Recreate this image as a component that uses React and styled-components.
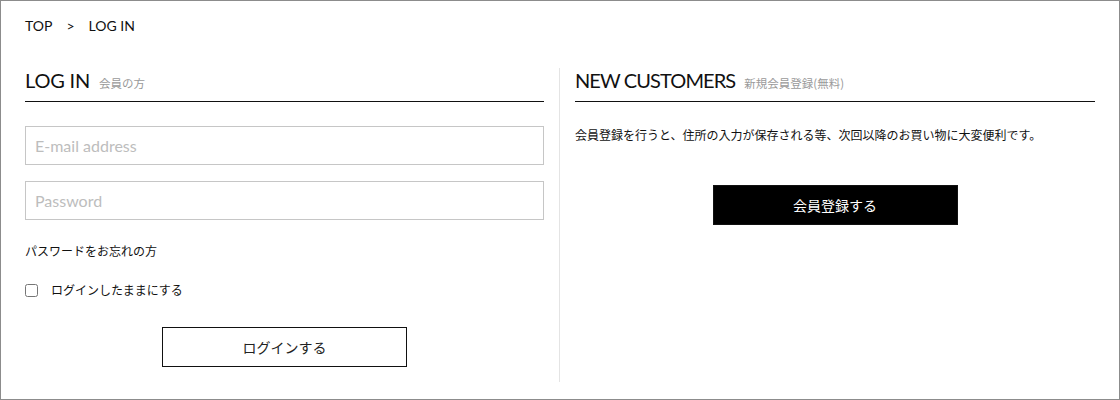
import React from "react";
import styled, { createGlobalStyle } from "styled-components";

const GlobalStyle = createGlobalStyle`
  html, body {
    margin: 0;
    padding: 0;
    background: #fff;
  }
  body {
    font-family: "Noto Sans CJK JP", "Noto Sans", sans-serif;
    color: #111;
  }
  * {
    box-sizing: border-box;
  }
`;

const Frame = styled.div`
  width: 1120px;
  height: 400px;
  border: 1px solid #8c8c8c;
  background: #fff;
  display: flex;
  flex-direction: column;
`;

const Breadcrumb = styled.nav`
  display: flex;
  align-items: center;
  gap: 14px;
  padding: 15px 24px 0;
  height: 35px;
  font-family: "Lato", "Liberation Sans", sans-serif;
  font-size: 14px;
  line-height: 20px;
  color: #111;
`;

const Columns = styled.div`
  flex: 1;
  display: flex;
  padding: 32px 24px 17px;
`;

const Column = styled.section`
  flex: ${(p) => (p.$right ? "1" : "0 0 534px")};
  display: flex;
  flex-direction: column;
  padding: ${(p) => (p.$right ? "0 0 0 15px" : "0 15px 0 0")};
  border-left: ${(p) => (p.$right ? "1px solid #e4e4e4" : "none")};
`;

const Heading = styled.div`
  display: flex;
  align-items: baseline;
  gap: 9px;
  padding-bottom: 9px;
  border-bottom: 1px solid #111;
  height: 34px;
`;

const Title = styled.h2`
  margin: 0;
  font-family: "Lato", "Liberation Sans", sans-serif;
  font-weight: 400;
  font-size: 20px;
  line-height: 24px;
  letter-spacing: ${(p) => p.$spacing || "-0.2px"};
  color: #111;
`;

const Sub = styled.span`
  font-family: "Noto Sans CJK JP", sans-serif;
  font-size: 11.5px;
  color: #9a9a9a;
`;

const Field = styled.input`
  display: block;
  width: 100%;
  height: 39px;
  margin-top: ${(p) => p.$gap}px;
  padding: 0 9px;
  border: 1px solid #c6c6c6;
  border-radius: 0;
  font-family: "Lato", "Liberation Sans", sans-serif;
  font-size: 16px;
  color: #222;
  outline: none;
  &::placeholder {
    color: #bdbdbd;
  }
`;

const Small = styled.p`
  margin: ${(p) => p.$margin};
  font-size: 12px;
  line-height: 18px;
  color: #111;
`;

const CheckRow = styled.label`
  display: flex;
  align-items: center;
  gap: 13px;
  margin-top: 21px;
  font-size: 12px;
  line-height: 18px;
  color: #111;
  input {
    margin: 0;
    width: 13px;
    height: 13px;
  }
`;

const Button = styled.button`
  display: block;
  align-self: center;
  width: 245px;
  height: 40px;
  margin-top: ${(p) => p.$top}px;
  border: 1px solid #111;
  border-radius: 0;
  background: ${(p) => (p.$dark ? "#000" : "#fff")};
  color: ${(p) => (p.$dark ? "#fff" : "#222")};
  font-family: "Noto Sans CJK JP", sans-serif;
  font-size: 14px;
  cursor: pointer;
`;

const App = () => {
  return (
    <Frame>
      <GlobalStyle />
      <Breadcrumb>
        <span>TOP</span>
        <span>&gt;</span>
        <span>LOG IN</span>
      </Breadcrumb>
      <Columns>
        <Column>
          <Heading>
            <Title>LOG IN</Title>
            <Sub>会員の方</Sub>
          </Heading>
          <Field $gap={24} type="email" placeholder="E-mail address" />
          <Field $gap={16} type="password" placeholder="Password" />
          <Small $margin="22px 0 0">パスワードをお忘れの方</Small>
          <CheckRow>
            <input type="checkbox" />
            ログインしたままにする
          </CheckRow>
          <Button $top={28}>ログインする</Button>
        </Column>
        <Column $right>
          <Heading>
            <Title $spacing="-0.9px">NEW CUSTOMERS</Title>
            <Sub>新規会員登録(無料)</Sub>
          </Heading>
          <Small $margin="24px 0 0">
            会員登録を行うと、住所の入力が保存される等、次回以降のお買い物に大変便利です。
          </Small>
          <Button $dark $top={41}>会員登録する</Button>
        </Column>
      </Columns>
    </Frame>
  );
};

export default App;
